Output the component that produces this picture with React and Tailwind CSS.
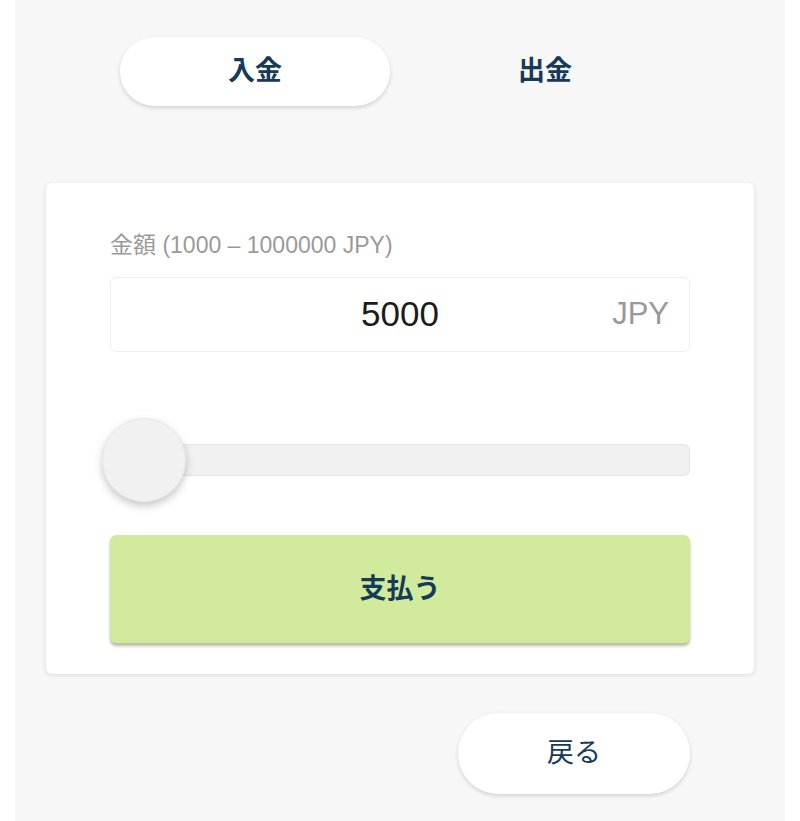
import React, { useState } from "react";

const font = { fontFamily: '"Liberation Sans", "Noto Sans CJK JP", sans-serif' };

export default function App() {
  const [tab, setTab] = useState("deposit");
  const [amount, setAmount] = useState(5000);

  return (
    <div className="min-h-screen bg-white flex justify-center" style={font}>
      <div className="w-[770px] min-h-[821px] bg-[#f7f7f7]">
        {/* Tabs */}
        <div className="pt-[37px] flex justify-center gap-5">
          <button
            onClick={() => setTab("deposit")}
            className={`w-[270px] h-[69px] rounded-full text-[27px] font-bold text-[#163a5a] ${
              tab === "deposit" ? "bg-white shadow-[0_2px_4px_rgba(0,0,0,0.15)]" : ""
            }`}
          >
            入金
          </button>
          <button
            onClick={() => setTab("withdraw")}
            className={`w-[270px] h-[69px] rounded-full text-[27px] font-bold text-[#163a5a] ${
              tab === "withdraw" ? "bg-white shadow-[0_2px_4px_rgba(0,0,0,0.15)]" : ""
            }`}
          >
            出金
          </button>
        </div>

        {/* Amount card */}
        <div className="mt-[77px] mx-[31px] bg-white rounded-md shadow-[0_1px_4px_rgba(0,0,0,0.12)] px-[64px] pt-[49px] pb-[31px]">
          <p className="text-[23px] leading-[26px] text-[#9a9a9a]">金額 (1000 – 1000000 JPY)</p>

          <div className="mt-[19px] h-[75px] rounded-md border border-[#efefef] flex items-center relative">
            <span className="flex-1 text-center text-[35px] text-[#1c1c1c]">{amount}</span>
            <span className="absolute right-[20px] text-[31px] text-[#999999]">JPY</span>
          </div>

          {/* Slider */}
          <div className="mt-[66px] h-[84px] flex items-center relative">
            <div className="w-full h-[32px] rounded-md bg-[#f1f1f1] border border-[#e6e6e6]" />
            <div className="absolute left-[-8px] top-0 w-[84px] h-[84px] rounded-full bg-[#f1f1f1] border border-[#e9e9e9] shadow-[0_4px_8px_rgba(0,0,0,0.22)]" />
          </div>

          <button
            onClick={() => setAmount(amount)}
            className="mt-[33px] w-full h-[108px] rounded-md bg-[#d1ea9b] shadow-[0_3px_3px_rgba(90,110,50,0.45)] text-[27px] font-bold text-[#163a5a]"
          >
            支払う
          </button>
        </div>

        {/* Back */}
        <div className="mt-[39px] flex justify-end pr-[95px]">
          <button className="w-[232px] h-[81px] rounded-full bg-white shadow-[0_2px_4px_rgba(0,0,0,0.15)] text-[27px] text-[#163a5a]">
            戻る
          </button>
        </div>
      </div>
    </div>
  );
}
